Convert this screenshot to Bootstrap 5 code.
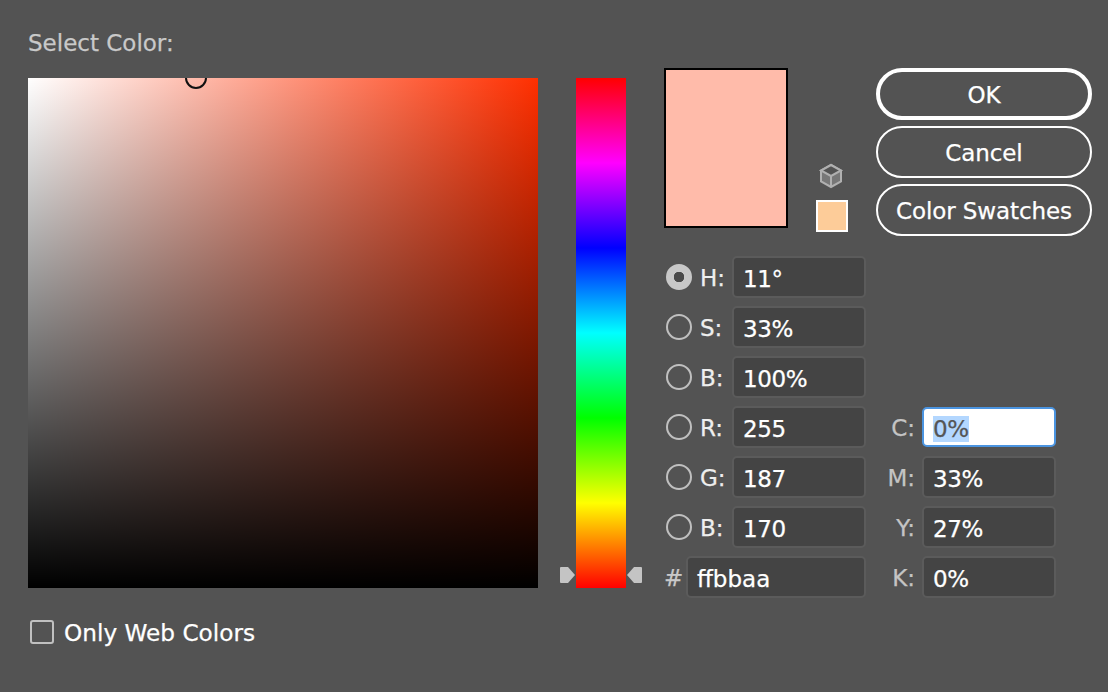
<!DOCTYPE html>
<html lang="en">
<head>
    <meta charset="UTF-8">
    <title>Select Color</title>
    <link rel="stylesheet" href="https://cdn.jsdelivr.net/npm/bootstrap@5.3.2/dist/css/bootstrap.min.css">
    <style>
        body { background: #535353; color: #fff; font-family: "DejaVu Sans", sans-serif; font-size: 23px; -webkit-text-stroke: 0.25px; width: 1108px; height: 692px; overflow: hidden; }
        .dlg { padding: 28px 16px 0 28px; }
        .dlg-title { color: #c9c9c9; font-size: 23px; line-height: 30px; height: 40px; }
        .picker-col { padding-top: 10px; }
        .sb-field { width: 510px; height: 510px; position: relative; overflow: hidden; background: linear-gradient(to bottom, transparent, #000), linear-gradient(to right, #fff, #ff2f00); }
        .sb-ring { position: absolute; left: 157px; top: -11px; width: 22px; height: 22px; border: 2px solid #111; border-radius: 50%; }
        .hue-col { margin-left: 38px; padding-top: 10px; }
        .hue-bar { width: 50px; height: 510px; position: relative; background: linear-gradient(to bottom, #f00, #f0f 16.67%, #00f 33.33%, #0ff 50%, #0f0 66.67%, #ff0 83.33%, #f00); }
        .hue-arrow { position: absolute; bottom: 5px; width: 16px; height: 16px; fill: #c4c4c4; }
        .hue-arrow-l { left: -16px; }
        .hue-arrow-r { right: -16px; }
        .side-col { margin-left: 38px; }
        .new-color { width: 124px; height: 160px; background: #ffbbaa; border: 2px solid #000; }
        .gamut-col { width: 88px; height: 164px; padding: 95px 0 0 28px; }
        .gamut-swatch { width: 32px; height: 32px; background: #fdcc99; border: 2px solid #fff; margin-top: 11px; }
        .gamut-cube { display: block; margin-left: 2px; width: 26px; height: 26px; }
        .btn-stack { width: 216px; gap: 6px; }
        .btn-dlg { height: 52px; padding: 3px 0 0; color: #fff; background: transparent; border: 2px solid #fff; font-size: 23px; letter-spacing: -0.1px; line-height: 1; }
        .btn-dlg:hover { color: #fff; }
        .btn-main { border-width: 4px; }
        .fields-area { margin-top: 20px; }
        .field-col { width: 202px; gap: 8px; }
        .cmyk-col { width: 190px; margin-left: 12px; padding-top: 150px; gap: 8px; }
        .field-row { height: 42px; }
        .radio-dlg.form-check-input { width: 26px; height: 26px; margin: 0 8px 0 2px; flex: none; background: transparent; border: 2px solid #c0c0c0; }
        .radio-dlg.form-check-input:checked { background: radial-gradient(circle, #4a4a4a 0 5px, #c8c8c8 5.5px); border-color: #c8c8c8; }
        .field-lbl { width: 32px; flex: none; color: #eee; padding-top: 2px; }
        .hash-lbl { width: 22px; flex: none; color: #c9c9c9; padding-top: 2px; }
        .cmyk-lbl { width: 37px; flex: none; text-align: right; margin-right: 7px; color: #c4c4c4; padding-top: 3px; }
        .num-box { width: 134px; height: 42px; flex: none; background: #444; border: 2px solid #5b5b5b; border-radius: 5px; padding-left: 9px; line-height: 42px; letter-spacing: -0.4px; }
        .hex-box { width: 180px; letter-spacing: 0; }
        .num-box.is-active { background: #fff; border-color: #4b94e0; color: #555; height: 40px; line-height: 40px; }
        .sel-text { background: #b3d7ff; }
        .web-row { margin-top: 19px; margin-left: 2px; height: 30px; gap: 10px; }
        .web-lbl { font-size: 23.2px; padding-top: 2px; }
        .web-check.form-check-input { width: 24px; height: 24px; margin: 0; background: transparent; border: 2px solid #c0c0c0; border-radius: 3px; }
    </style>
</head>
<body>
    <div class="dlg">
        <div class="dlg-title">Select Color:</div>
        <div class="main-area d-flex">
            <div class="picker-col">
                <div class="sb-field"><div class="sb-ring"></div></div>
            </div>
            <div class="hue-col">
                <div class="hue-bar">
                    <svg class="hue-arrow hue-arrow-l" viewBox="0 0 16 16"><path d="M1 0h7l7 8-7 8H1a1 1 0 0 1-1-1V1a1 1 0 0 1 1-1z"/></svg>
                    <svg class="hue-arrow hue-arrow-r" viewBox="0 0 16 16"><path d="M15 0H8L1 8l7 8h7a1 1 0 0 0 1-1V1a1 1 0 0 0-1-1z"/></svg>
                </div>
            </div>
            <div class="side-col">
                <div class="d-flex">
                    <div class="new-color"></div>
                    <div class="gamut-col">
                        <svg class="gamut-cube" viewBox="0 0 26 26"><path d="M13 2l10 5.500v11L13 24 3 18.500v-11z" fill="#777" stroke="#b0b0b0" stroke-width="2"/><path d="M13 2l10 5.500-10 5.500-10-5.500z" fill="#535353" stroke="#b0b0b0" stroke-width="2"/><path d="M13 13v11" fill="none" stroke="#b0b0b0" stroke-width="2"/></svg>
                        <div class="gamut-swatch"></div>
                    </div>
                    <div class="btn-stack d-flex flex-column">
                        <button type="button" class="btn btn-dlg btn-main rounded-pill">OK</button>
                        <button type="button" class="btn btn-dlg rounded-pill">Cancel</button>
                        <button type="button" class="btn btn-dlg rounded-pill">Color Swatches</button>
                    </div>
                </div>
                <div class="fields-area d-flex">
                    <div class="field-col d-flex flex-column">
                        <div class="field-row d-flex align-items-center"><input class="form-check-input radio-dlg" type="radio" name="mode" checked><span class="field-lbl">H:</span><div class="num-box">11°</div></div>
                        <div class="field-row d-flex align-items-center"><input class="form-check-input radio-dlg" type="radio" name="mode"><span class="field-lbl">S:</span><div class="num-box">33%</div></div>
                        <div class="field-row d-flex align-items-center"><input class="form-check-input radio-dlg" type="radio" name="mode"><span class="field-lbl">B:</span><div class="num-box">100%</div></div>
                        <div class="field-row d-flex align-items-center"><input class="form-check-input radio-dlg" type="radio" name="mode"><span class="field-lbl">R:</span><div class="num-box">255</div></div>
                        <div class="field-row d-flex align-items-center"><input class="form-check-input radio-dlg" type="radio" name="mode"><span class="field-lbl">G:</span><div class="num-box">187</div></div>
                        <div class="field-row d-flex align-items-center"><input class="form-check-input radio-dlg" type="radio" name="mode"><span class="field-lbl">B:</span><div class="num-box">170</div></div>
                        <div class="field-row d-flex align-items-center"><span class="hash-lbl">#</span><div class="num-box hex-box">ffbbaa</div></div>
                    </div>
                    <div class="cmyk-col d-flex flex-column">
                        <div class="field-row d-flex align-items-center"><span class="cmyk-lbl">C:</span><div class="num-box is-active"><span class="sel-text">0%</span></div></div>
                        <div class="field-row d-flex align-items-center"><span class="cmyk-lbl">M:</span><div class="num-box">33%</div></div>
                        <div class="field-row d-flex align-items-center"><span class="cmyk-lbl">Y:</span><div class="num-box">27%</div></div>
                        <div class="field-row d-flex align-items-center"><span class="cmyk-lbl">K:</span><div class="num-box">0%</div></div>
                    </div>
                </div>
            </div>
        </div>
        <div class="web-row d-flex align-items-center">
            <input class="form-check-input web-check" type="checkbox">
            <span class="web-lbl">Only Web Colors</span>
        </div>
    </div>
    <script src="https://cdn.jsdelivr.net/npm/bootstrap@5.3.2/dist/js/bootstrap.bundle.min.js"></script>
</body>
</html>
